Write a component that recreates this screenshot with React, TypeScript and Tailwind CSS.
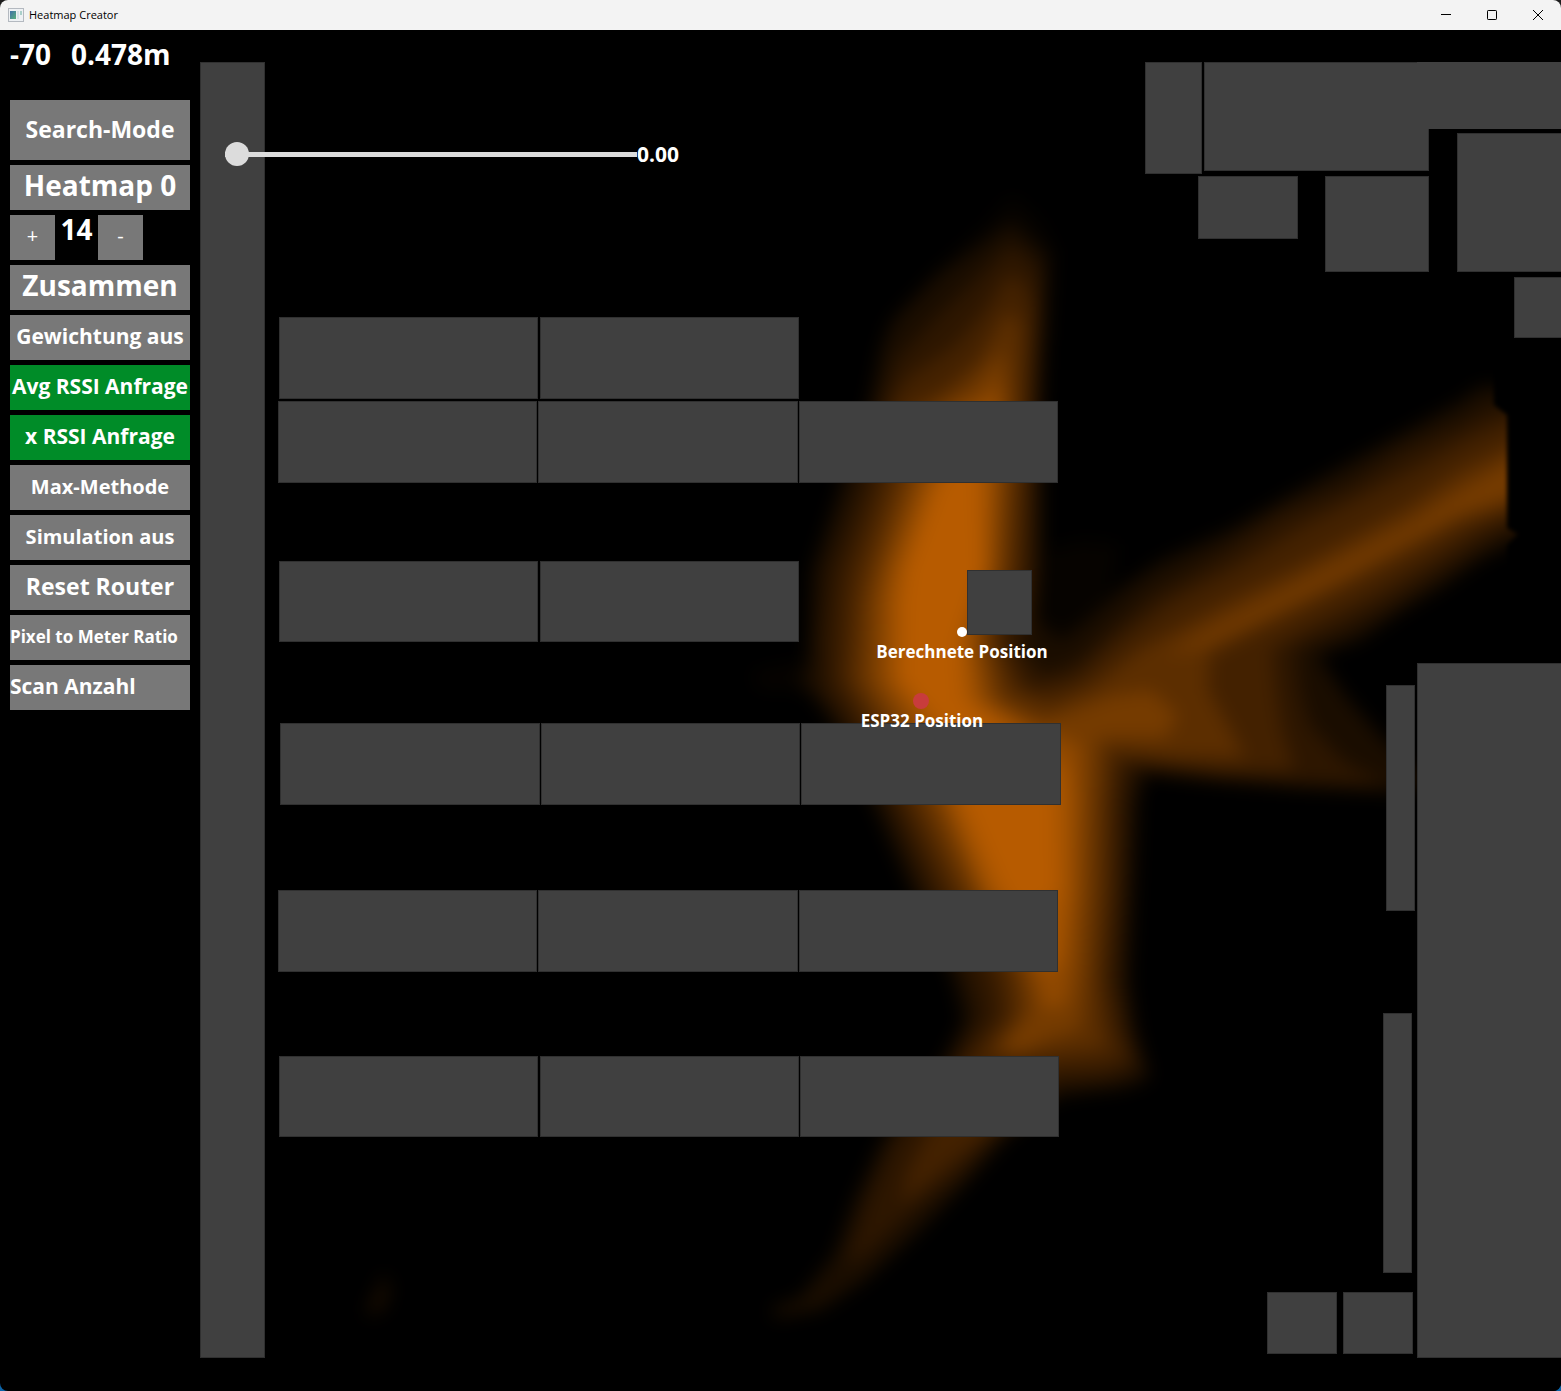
import { useState } from "react";

type HeatLevel = { color: string; shapes: string[] };

/* Signal strength contours, weakest first. Coordinates are window pixels. */
const heatLevels: HeatLevel[] = [
  {
    color: "#060300",
    shapes: [
      "1050,550 1080,540 1120,545 1110,590 1080,640 1040,660",
      "1012,195 1040,220 1056,250 1050,340 1000,340 880,330 930,275 985,225",
      "750,672 810,660 830,690 760,690",
    ],
  },
  {
    color: "#1a0d00",
    shapes: [
      "1012,222 1026,236 1048,255 1046,300 1042,400 1042,560 1038,620 1060,640 1085,622 1120,590 1160,562 1230,530 1290,495 1350,462 1390,440 1445,410 1460,402 1482,386 1530,392 1530,535 1480,560 1440,588 1400,612 1360,640 1318,655 1345,695 1380,735 1430,785 1390,792 1300,788 1220,782 1146,774 1138,800 1134,890 1129,980 1136,1030 1150,1078 1125,1088 1060,1096 1040,1110 1005,1140 960,1190 915,1235 865,1280 820,1310 775,1318 772,1308 800,1298 834,1255 854,1200 882,1140 944,1060 964,1020 952,975 912,892 874,805 832,723 815,698 800,684 808,662 812,570 842,483 870,400 882,345 896,318 940,274 985,242",
      "384,1272 390,1292 382,1310 368,1316 368,1306 377,1292",
    ],
  },
  {
    color: "#2d1600",
    shapes: [
      "1010,245 1028,256 1042,276 1040,340 1036,400 1036,570 1034,600 1022,650 1045,675 1080,660 1110,630 1150,595 1220,555 1280,515 1350,485 1400,452 1460,425 1490,408 1530,408 1530,520 1490,540 1440,572 1390,605 1340,632 1296,650 1300,690 1310,725 1345,762 1390,786 1300,783 1220,776 1134,766 1128,800 1124,890 1120,980 1128,1030 1140,1068 1110,1080 1055,1084 1000,1130 960,1175 912,1212 866,1254 844,1268 854,1240 868,1200 895,1140 954,1060 980,1015 968,975 926,892 888,805 846,723 822,690 820,640 828,570 860,483 882,400 896,360 935,318 970,285",
    ],
  },
  {
    color: "#432100",
    shapes: [
      "1008,275 1022,280 1034,305 1030,400 1028,483 1024,570 1004,640 1030,690 1075,680 1120,640 1170,602 1240,565 1300,528 1360,498 1420,466 1470,438 1530,412 1530,510 1480,530 1430,562 1370,598 1310,628 1272,650 1276,690 1282,730 1295,770 1220,772 1122,762 1116,800 1115,890 1108,980 1118,1030 1128,1060 1100,1068 1050,1070 1000,1125 950,1165 920,1190 900,1205 908,1170 924,1140 966,1060 1000,1015 992,975 940,892 900,805 860,723 836,680 840,600 845,570 876,483 892,400 908,378 955,345 985,310",
    ],
  },
  {
    color: "#5c2e00",
    shapes: [
      "1008,310 1022,325 1020,400 1018,483 1014,570 994,640 1012,690 1050,705 1095,685 1140,650 1220,605 1290,570 1350,538 1410,505 1460,470 1530,435 1530,500 1460,524 1400,558 1340,590 1280,620 1210,655 1208,690 1228,725 1245,758 1170,756 1110,750 1106,800 1104,890 1098,980 1102,1030 1108,1048 1050,1055 985,1056 1015,1015 1010,975 956,892 915,805 875,723 850,680 856,600 862,570 892,483 902,412 944,390 978,360",
    ],
  },
  {
    color: "#753b00",
    shapes: [
      "1004,350 1010,400 1008,483 1004,570 986,640 1000,700 1040,722 1080,708 1110,696 1150,690 1178,715 1165,738 1098,738 1094,800 1092,890 1086,980 1080,1030 1046,1040 1018,1056 1000,1050 1030,1010 1022,975 970,892 930,805 890,723 864,680 868,600 876,570 906,483 930,412 970,388",
      "1165,656 1220,624 1290,588 1350,556 1410,524 1460,490 1530,450 1530,492 1460,514 1400,545 1340,578 1280,608 1200,648",
    ],
  },
  {
    color: "#8f4800",
    shapes: [
      "998,380 1002,410 999,483 995,570 976,640 988,700 1030,724 1080,745 1082,800 1080,890 1074,960 1066,1005 1044,1010 1034,975 980,892 944,805 906,723 878,680 880,600 886,570 918,483 950,412 985,398",
    ],
  },
  {
    color: "#a75400",
    shapes: [
      "990,405 994,430 990,483 988,570 968,640 976,700 1020,730 1068,770 1070,800 1070,890 1060,960 1048,975 988,892 952,805 924,723 892,680 892,600 898,570 930,483 965,430",
    ],
  },
  {
    color: "#b75b00",
    shapes: [
      "972,440 978,483 982,570 958,640 962,700 1010,740 1054,790 1056,890 1030,920 1004,892 966,805 940,723 902,680 904,600 908,570 940,483",
    ],
  },
];

type Box = [x: number, y: number, width: number, height: number];

const obstacles: Box[] = [
  [200, 62, 65, 1296],
  [279, 317, 259, 82],
  [540, 317, 259, 82],
  [278, 401, 259, 82],
  [538, 401, 260, 82],
  [799, 401, 259, 82],
  [279, 561, 259, 81],
  [540, 561, 259, 81],
  [967, 570, 65, 65],
  [280, 723, 260, 82],
  [541, 723, 259, 82],
  [801, 723, 260, 82],
  [278, 890, 259, 82],
  [538, 890, 260, 82],
  [799, 890, 259, 82],
  [279, 1056, 259, 81],
  [540, 1056, 259, 81],
  [800, 1056, 259, 81],
  [1145, 62, 57, 112],
  [1204, 62, 225, 109],
  [1198, 176, 100, 63],
  [1325, 176, 104, 96],
  [1457, 133, 110, 139],
  [1514, 277, 50, 61],
  [1417, 663, 150, 695],
  [1386, 685, 29, 226],
  [1383, 1013, 29, 260],
  [1267, 1292, 70, 62],
  [1343, 1292, 70, 62],
];

function FloorPlan() {
  return (
    <svg
      viewBox="200 30 1361 1361"
      className="block h-auto w-full"
      role="img"
      aria-label="Heatmap"
    >
      <defs>
        <filter id="spread" x="-10%" y="-10%" width="120%" height="120%" colorInterpolationFilters="sRGB">
          <feGaussianBlur stdDeviation="9" />
        </filter>
        <filter id="edge" x="-5%" y="-5%" width="110%" height="110%" colorInterpolationFilters="sRGB">
          <feGaussianBlur stdDeviation="2" />
        </filter>
        <clipPath id="range">
          <polygon points="200,30 1488,30 1494,405 1507,415 1507,528 1518,534 1507,545 1507,1391 200,1391" />
        </clipPath>
      </defs>
      <rect x="200" y="30" width="1361" height="1361" fill="#000000" />
      <g filter="url(#edge)">
        <g clipPath="url(#range)">
          <g filter="url(#spread)">
            {heatLevels.map((level) =>
              level.shapes.map((points) => (
                <polygon key={points} points={points} fill={level.color} />
              )),
            )}
          </g>
        </g>
      </g>
      {obstacles.map(([x, y, width, height]) => (
        <rect
          key={`${x}-${y}`}
          x={x + 0.5}
          y={y + 0.5}
          width={width - 1}
          height={height - 1}
          fill="#404040"
          stroke="#303030"
        />
      ))}
      <rect x="1417" y="62" width="144" height="67" fill="#404040" />
      <circle cx="962" cy="632" r="5" fill="#ffffff" />
      <circle cx="921" cy="701" r="8" fill="#c83c3c" />
      <g fill="#ffffff" fontSize="17" fontWeight="700" textAnchor="middle">
        <text x="962" y="658">
          Berechnete Position
        </text>
        <text x="922" y="727">
          ESP32 Position
        </text>
      </g>
    </svg>
  );
}

function TitleBar() {
  return (
    <header className="flex h-[30px] items-center bg-[#f3f3f3] text-black">
      <svg viewBox="0 0 16 14" className="ml-2 h-[14px] w-4" aria-hidden="true">
        <defs>
          <linearGradient id="appIcon" x1="0" y1="0" x2="1" y2="1">
            <stop offset="0" stopColor="#3f70a8" />
            <stop offset="1" stopColor="#58b07c" />
          </linearGradient>
        </defs>
        <rect x="0.5" y="0.5" width="15" height="13" fill="#eef1f4" stroke="#b4b9c0" />
        <rect x="2" y="3" width="6" height="8" fill="url(#appIcon)" />
        <rect x="9" y="3" width="2" height="8" fill="#d5e2e6" />
        <rect x="12" y="3" width="2" height="4" fill="#a9cfc9" />
      </svg>
      <h1 className="ml-[5px] grow text-[11px] leading-4">Heatmap Creator</h1>
      <button type="button" aria-label="Minimize" className="flex h-full w-[46px] items-center justify-center">
        <svg viewBox="0 0 10 10" className="size-[10px]" fill="none" stroke="currentColor">
          <path d="M0 4.5h10" />
        </svg>
      </button>
      <button type="button" aria-label="Maximize" className="flex h-full w-[46px] items-center justify-center">
        <svg viewBox="0 0 10 10" className="size-[10px]" fill="none" stroke="currentColor">
          <rect x="0.5" y="0.5" width="9" height="9" rx="0.7" />
        </svg>
      </button>
      <button type="button" aria-label="Close" className="flex h-full w-[46px] items-center justify-center">
        <svg viewBox="0 0 10 10" className="size-[10px]" fill="none" stroke="currentColor">
          <path d="M0 0l10 10M10 0L0 10" />
        </svg>
      </button>
    </header>
  );
}

const base = "flex w-full items-center whitespace-nowrap";
const gray = "bg-[#787878]";
const green = "bg-[#008c28]";

const modes = [
  { label: "Zusammen", style: `${gray} justify-center pb-[6px] text-[28px]` },
  { label: "Gewichtung aus", style: `${gray} justify-center pb-[2px] text-[21px]` },
  { label: "Avg RSSI Anfrage", style: `${green} justify-center pb-[2px] text-[21px]` },
  { label: "x RSSI Anfrage", style: `${green} justify-center pb-[2px] text-[21px]` },
  { label: "Max-Methode", style: `${gray} justify-center pb-[2px] text-[20px]` },
  { label: "Simulation aus", style: `${gray} justify-center pb-[2px] text-[20px]` },
  { label: "Reset Router", style: `${gray} justify-center pb-[2px] text-[23px]` },
  { label: "Pixel to Meter Ratio", style: `${gray} pb-[2px] text-[17px]` },
  { label: "Scan Anzahl", style: `${gray} pb-[2px] text-[21px]` },
];

function Sidebar() {
  const [count, setCount] = useState(14);
  return (
    <aside className="flex w-[200px] shrink-0 flex-col gap-[5px] px-[10px] font-bold">
      <div className="mb-[17px] flex h-12 gap-5 text-[28px] leading-[48px]">
        <output>-70</output>
        <output>0.478m</output>
      </div>
      <button type="button" className={`${base} ${gray} h-[60px] justify-center pb-[2px] text-[23px]`}>
        Search-Mode
      </button>
      <button type="button" className={`${base} ${gray} h-[45px] justify-center pb-[6px] text-[28px]`}>
        Heatmap 0
      </button>
      <div className="flex">
        <button
          type="button"
          aria-label="Increase"
          className="size-[45px] bg-[#787878] pb-1 text-[20px] font-medium"
          onClick={() => setCount(count + 1)}
        >
          +
        </button>
        <output className="w-[43px] text-center text-[28px] leading-[28px]">{count}</output>
        <button
          type="button"
          aria-label="Decrease"
          className="size-[45px] bg-[#787878] pb-1 text-[20px] font-medium"
          onClick={() => setCount(count - 1)}
        >
          -
        </button>
      </div>
      {modes.map((mode) => (
        <button key={mode.label} type="button" className={`${base} ${mode.style} h-[45px]`}>
          {mode.label}
        </button>
      ))}
    </aside>
  );
}

export default function App() {
  const [value, setValue] = useState(0);
  return (
    <div className="min-h-screen bg-linear-to-b from-[#1c1c1c] to-[#0c64a8] font-['Open_Sans',sans-serif] text-white">
      <div className="min-h-screen overflow-hidden rounded-lg bg-black">
        <TitleBar />
        <div className="flex">
          <Sidebar />
          <main className="relative min-w-0 grow">
            <FloorPlan />
            <label className="absolute top-[109px] left-[25px] flex h-[30px] items-center">
              <input
                type="range"
                min="0"
                max="1"
                step="0.01"
                value={value}
                onChange={(event) => setValue(Number(event.target.value))}
                aria-label="Threshold"
                className="h-6 w-[412px] appearance-none bg-[linear-gradient(#dcdcdc,#dcdcdc)] bg-[length:100%_5px] bg-center bg-no-repeat [&::-webkit-slider-thumb]:size-6 [&::-webkit-slider-thumb]:appearance-none [&::-webkit-slider-thumb]:rounded-full [&::-webkit-slider-thumb]:bg-[#dcdcdc]"
              />
              <span className="text-[21px] leading-[30px] font-bold">{value.toFixed(2)}</span>
            </label>
          </main>
        </div>
      </div>
    </div>
  );
}
